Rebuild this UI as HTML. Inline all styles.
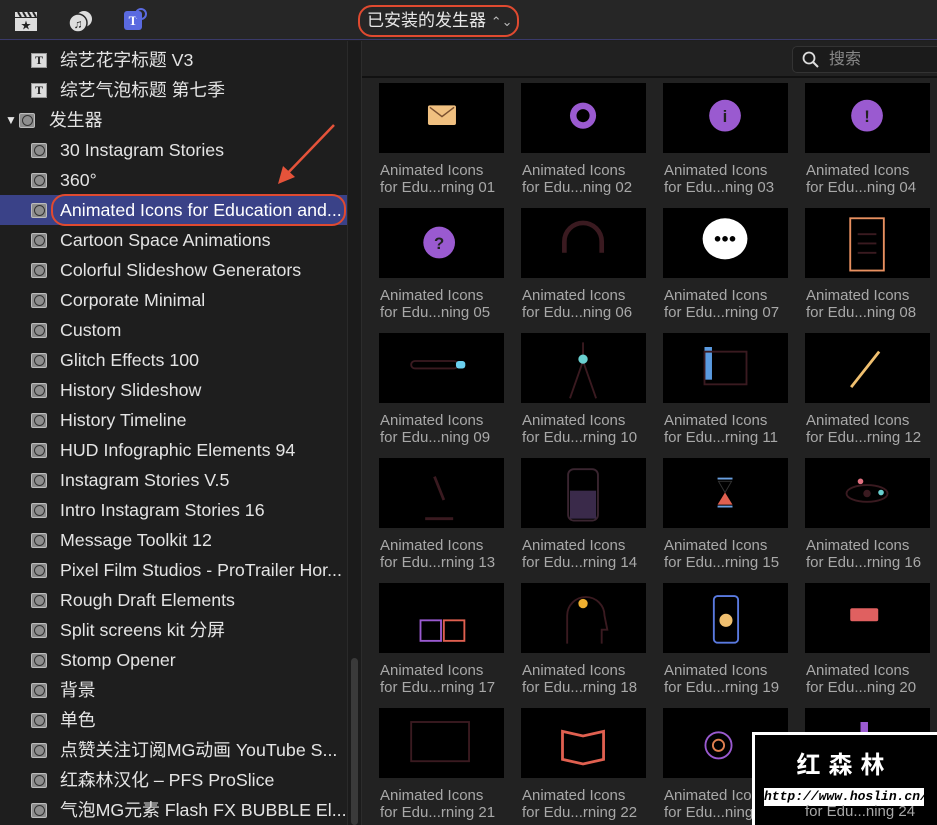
<!DOCTYPE html>
<html><head><meta charset="utf-8"><style>
*{margin:0;padding:0;box-sizing:border-box}
body{width:937px;height:825px;overflow:hidden;background:#1f1f1f;font-family:"Liberation Sans","Noto Sans CJK SC",sans-serif;position:relative}
#top{position:absolute;left:0;top:0;width:937px;height:40px;background:#262626;border-bottom:1px solid #3a3a6a}
#left{position:absolute;left:0;top:41px;width:347px;height:784px;background:#1e1e1e}
#sb{position:absolute;left:347px;top:41px;width:15px;height:784px;background:#1b1b1b;border-left:1px solid #2a2a2a;border-right:1px solid #2c2c2c}
#thumb{position:absolute;left:351px;top:658px;width:7px;height:167px;border-radius:4px;background:#3a3a3a}
#right{position:absolute;left:362px;top:41px;width:575px;height:784px;background:#222}
#srch{position:absolute;left:362px;top:41px;width:575px;height:37px;background:#212121;border-bottom:2px solid #111}
.row{position:absolute;left:0;width:347px;height:30px;color:#e4e4e4;font-size:17.8px;line-height:30px;white-space:nowrap}
.row .ic{position:absolute;left:31px;top:8px;width:16px;height:15px;background:#8e8e8e;border:1px solid #bbb;border-radius:2px}
.row .ic::after{content:"";position:absolute;left:2px;top:1px;width:9px;height:9px;border:1.5px solid #333;border-radius:50%}
.row .t{position:absolute;left:60px}
.row .T{position:absolute;left:31px;top:8px;width:16px;height:15px;background:#ddd;border:1px solid #999;color:#222;font:bold 12px "Liberation Serif",serif;text-align:center;line-height:13px}
.tile{position:absolute;width:125px;height:70px;background:#000}
.lab{position:absolute;width:140px;color:#a8a8a8;font-size:15px;line-height:17px}
</style></head><body>
<div id="top">
<svg style="position:absolute;left:14px;top:10px" width="24" height="22"><rect x="1" y="8" width="22" height="13" fill="#ddd"/><path d="M1 2h22v5H1z" fill="#ddd"/><path d="M4 2l3 5M9 2l3 5M14 2l3 5M19 2l3 5" stroke="#262626" stroke-width="2"/><text x="12" y="19" font-size="10" text-anchor="middle" fill="#222">★</text></svg>
<svg style="position:absolute;left:68px;top:9px" width="26" height="24"><circle cx="16" cy="10" r="8" fill="#ddd"/><circle cx="10" cy="14" r="9" fill="#ddd" stroke="#262626" stroke-width="1.5"/><text x="10" y="19" font-size="12" text-anchor="middle" fill="#222">♫</text></svg>
<div style="position:absolute;left:124px;top:11px;width:18px;height:19px;background:#5a6ae0;border-radius:3px;color:#fff;font:bold 13px 'Liberation Serif',serif;text-align:center;line-height:19px">T</div>
<div style="position:absolute;left:135px;top:8px;width:12px;height:12px;border:2px solid #5a6ae0;border-radius:50%"></div>
<div style="position:absolute;left:358px;top:5px;width:161px;height:32px;border:2.5px solid #e04a30;border-radius:14px;color:#e8e8e8;font-size:17px;line-height:27px;padding-left:7px">已安装的发生器 <span style="font-size:13px;color:#bbb">⌃⌄</span></div>
</div>
<div id="left">
<div class="row" style="top:4px"><span class="T">T</span><span class="t">综艺花字标题 V3</span></div>
<div class="row" style="top:34px"><span class="T">T</span><span class="t">综艺气泡标题 第七季</span></div>
<div class="row" style="top:64px"><span style="position:absolute;left:5px;font-size:12px">▼</span><span class="ic" style="left:19px"></span><span class="t" style="left:49px">发生器</span></div>
<div class="row" style="top:94px"><span class="ic"></span><span class="t">30 Instagram Stories</span></div>
<div class="row" style="top:124px"><span class="ic"></span><span class="t">360°</span></div>
<div class="row" style="top:154px;background:#3a4288;color:#fff"><span class="ic"></span><span class="t">Animated Icons for Education and...</span><div style="position:absolute;left:51px;top:-1px;width:295px;height:32px;border:2.5px solid #e04a30;border-radius:14px"></div></div>
<div class="row" style="top:184px"><span class="ic"></span><span class="t">Cartoon Space Animations</span></div>
<div class="row" style="top:214px"><span class="ic"></span><span class="t">Colorful Slideshow Generators</span></div>
<div class="row" style="top:244px"><span class="ic"></span><span class="t">Corporate Minimal</span></div>
<div class="row" style="top:274px"><span class="ic"></span><span class="t">Custom</span></div>
<div class="row" style="top:304px"><span class="ic"></span><span class="t">Glitch Effects 100</span></div>
<div class="row" style="top:334px"><span class="ic"></span><span class="t">History Slideshow</span></div>
<div class="row" style="top:364px"><span class="ic"></span><span class="t">History Timeline</span></div>
<div class="row" style="top:394px"><span class="ic"></span><span class="t">HUD Infographic Elements 94</span></div>
<div class="row" style="top:424px"><span class="ic"></span><span class="t">Instagram Stories V.5</span></div>
<div class="row" style="top:454px"><span class="ic"></span><span class="t">Intro Instagram Stories 16</span></div>
<div class="row" style="top:484px"><span class="ic"></span><span class="t">Message Toolkit 12</span></div>
<div class="row" style="top:514px"><span class="ic"></span><span class="t">Pixel Film Studios - ProTrailer Hor...</span></div>
<div class="row" style="top:544px"><span class="ic"></span><span class="t">Rough Draft Elements</span></div>
<div class="row" style="top:574px"><span class="ic"></span><span class="t">Split screens kit 分屏</span></div>
<div class="row" style="top:604px"><span class="ic"></span><span class="t">Stomp Opener</span></div>
<div class="row" style="top:634px"><span class="ic"></span><span class="t">背景</span></div>
<div class="row" style="top:664px"><span class="ic"></span><span class="t">单色</span></div>
<div class="row" style="top:694px"><span class="ic"></span><span class="t">点赞关注订阅MG动画 YouTube S...</span></div>
<div class="row" style="top:724px"><span class="ic"></span><span class="t">红森林汉化 – PFS ProSlice</span></div>
<div class="row" style="top:754px"><span class="ic"></span><span class="t">气泡MG元素 Flash FX BUBBLE El...</span></div>
</div>
<svg style="position:absolute;left:270px;top:122px" width="70" height="65"><path d="M64 3L14 55" stroke="#e5533a" stroke-width="2.5"/><path d="M8 62l5-18 12 11z" fill="#e5533a"/></svg>
<div id="sb"></div><div id="thumb"></div>
<div id="right"></div>
<div id="srch"><div style="position:absolute;left:430px;top:5px;width:150px;height:27px;background:#1b1b1b;border:1px solid #333;border-radius:5px;color:#888;font-size:16px;line-height:25px;padding-left:36px">搜索<svg style="position:absolute;left:9px;top:4px" width="18" height="18"><circle cx="7" cy="7" r="5.5" stroke="#ddd" stroke-width="1.8" fill="none"/><path d="M11 11l5 5" stroke="#ddd" stroke-width="2"/></svg></div></div>
<div id="grid"></div>
<script>
var xs=[379,521,663,805],ys=[83,208,333,458,583,708];
var icons=[
'<rect x="48" y="24" width="30" height="21" rx="2" fill="#f0c080"/><path d="M50 26l13 10 13-10" stroke="#7a5030" fill="none" stroke-width="1.5"/>',
'<circle cx="62" cy="35" r="14" fill="#9a5ad0"/><circle cx="62" cy="35" r="7" fill="#000"/>',
'<circle cx="62" cy="35" r="17" fill="#9a5ad0"/><text x="62" y="42" text-anchor="middle" font-size="18" font-weight="bold" fill="#222">i</text>',
'<circle cx="62" cy="35" r="17" fill="#9a5ad0"/><text x="62" y="42" text-anchor="middle" font-size="18" font-weight="bold" fill="#222">!</text>',
'<circle cx="60" cy="37" r="17" fill="#9a5ad0"/><text x="60" y="44" text-anchor="middle" font-size="18" font-weight="bold" fill="#222">?</text>',
'<path d="M42 48v-12a20 20 0 0 1 40 0v12" stroke="#3a1a20" stroke-width="5" fill="none"/>',
'<ellipse cx="62" cy="33" rx="24" ry="22" fill="#fff"/><circle cx="54" cy="33" r="3" fill="#000"/><circle cx="62" cy="33" r="3" fill="#000"/><circle cx="70" cy="33" r="3" fill="#000"/>',
'<rect x="44" y="11" width="36" height="56" fill="none" stroke="#e89060" stroke-width="2"/><path d="M52 28h20M52 38h20M52 48h20" stroke="#3a1a20" stroke-width="2"/>',
'<rect x="30" y="30" width="50" height="8" rx="4" fill="none" stroke="#3a1a20" stroke-width="2"/><rect x="78" y="30" width="10" height="8" rx="3" fill="#6ad0f0"/>',
'<path d="M62 10v20M62 30l-14 40M62 30l14 40" stroke="#3a1a20" stroke-width="2"/><circle cx="62" cy="28" r="5" fill="#6ad0d0"/>',
'<rect x="40" y="15" width="8" height="35" fill="#5a9ae0"/><rect x="40" y="20" width="45" height="35" fill="none" stroke="#3a1a20" stroke-width="2"/>',
'<path d="M45 58l30-38" stroke="#f0c070" stroke-width="3"/>',
'<path d="M55 20l10 25M45 65h30" stroke="#3a1a20" stroke-width="3"/>',
'<rect x="46" y="12" width="32" height="55" rx="6" fill="none" stroke="#3a2530" stroke-width="2"/><rect x="48" y="35" width="28" height="30" fill="#3a2a4a"/>',
'<path d="M55 25h14l-7 12z" fill="#000" stroke="#333"/><path d="M62 37l-8 13h16z" fill="#e06050"/><path d="M54 22h16M54 52h16" stroke="#6aa0e0" stroke-width="2"/>',
'<ellipse cx="62" cy="38" rx="22" ry="9" fill="none" stroke="#3a1a20" stroke-width="2"/><circle cx="62" cy="38" r="4" fill="#3a1a20"/><circle cx="55" cy="25" r="3" fill="#e07080"/><circle cx="77" cy="37" r="3" fill="#6ad0d0"/>',
'<rect x="40" y="40" width="22" height="22" fill="none" stroke="#9a5ad0" stroke-width="2"/><rect x="65" y="40" width="22" height="22" fill="none" stroke="#e06050" stroke-width="2"/>',
'<path d="M45 65v-30a20 20 0 0 1 40 0l3 15h-6v15" stroke="#3a1a20" stroke-width="2" fill="none"/><circle cx="62" cy="22" r="5" fill="#f0b030"/>',
'<rect x="50" y="14" width="26" height="50" rx="4" fill="none" stroke="#5a7ae0" stroke-width="2"/><circle cx="63" cy="40" r="7" fill="#f0c070"/>',
'<rect x="44" y="27" width="30" height="14" rx="2" fill="#e06060"/>',
'<rect x="30" y="15" width="62" height="42" fill="none" stroke="#3a1a20" stroke-width="2"/>',
'<path d="M40 25l22 5 22-5v30l-22 5-22-5z" fill="none" stroke="#e06050" stroke-width="3"/>',
'<circle cx="55" cy="40" r="14" fill="none" stroke="#9a5ad0" stroke-width="2"/><circle cx="55" cy="40" r="6" fill="none" stroke="#e08050" stroke-width="2"/>',
'<rect x="55" y="15" width="8" height="30" fill="#9a5ad0"/>'];
var h='';
for(var r=0;r<6;r++)for(var c=0;c<4;c++){var i=r*4+c,n=i+1;var s=(n<10?'0':'')+n;
var e=[2,3,4,5,6,8,9,20,23,24].indexOf(n)>=0?'ning':'rning';
h+='<div class="tile" style="left:'+xs[c]+'px;top:'+ys[r]+'px"><svg width="125" height="70" viewBox="0 0 125 75">'+icons[i]+'</svg></div>';
h+='<div class="lab" style="left:'+(xs[c]+1)+'px;top:'+(ys[r]+79)+'px">Animated Icons<br>for Edu...'+e+' '+s+'</div>';}
document.getElementById('grid').innerHTML=h;
</script>
<div style="position:absolute;left:752px;top:732px;width:185px;height:93px;background:#000;border:3px solid #fff;border-right:none;border-bottom:none"></div>
<div style="position:absolute;left:752px;top:745px;width:185px;text-align:center;color:#fff;font-size:24px;font-weight:bold;letter-spacing:8px">红森林</div>
<div style="position:absolute;left:764px;top:788px;width:160px;height:18px;background:#fff;color:#000;font:italic bold 13px 'Liberation Mono',monospace;line-height:18px;text-align:center">http://www.hoslin.cn/</div>
<div style="position:absolute;left:805px;top:803px;color:#a8a8a8;font-size:15px">for Edu...ning 24</div>
</body></html>
